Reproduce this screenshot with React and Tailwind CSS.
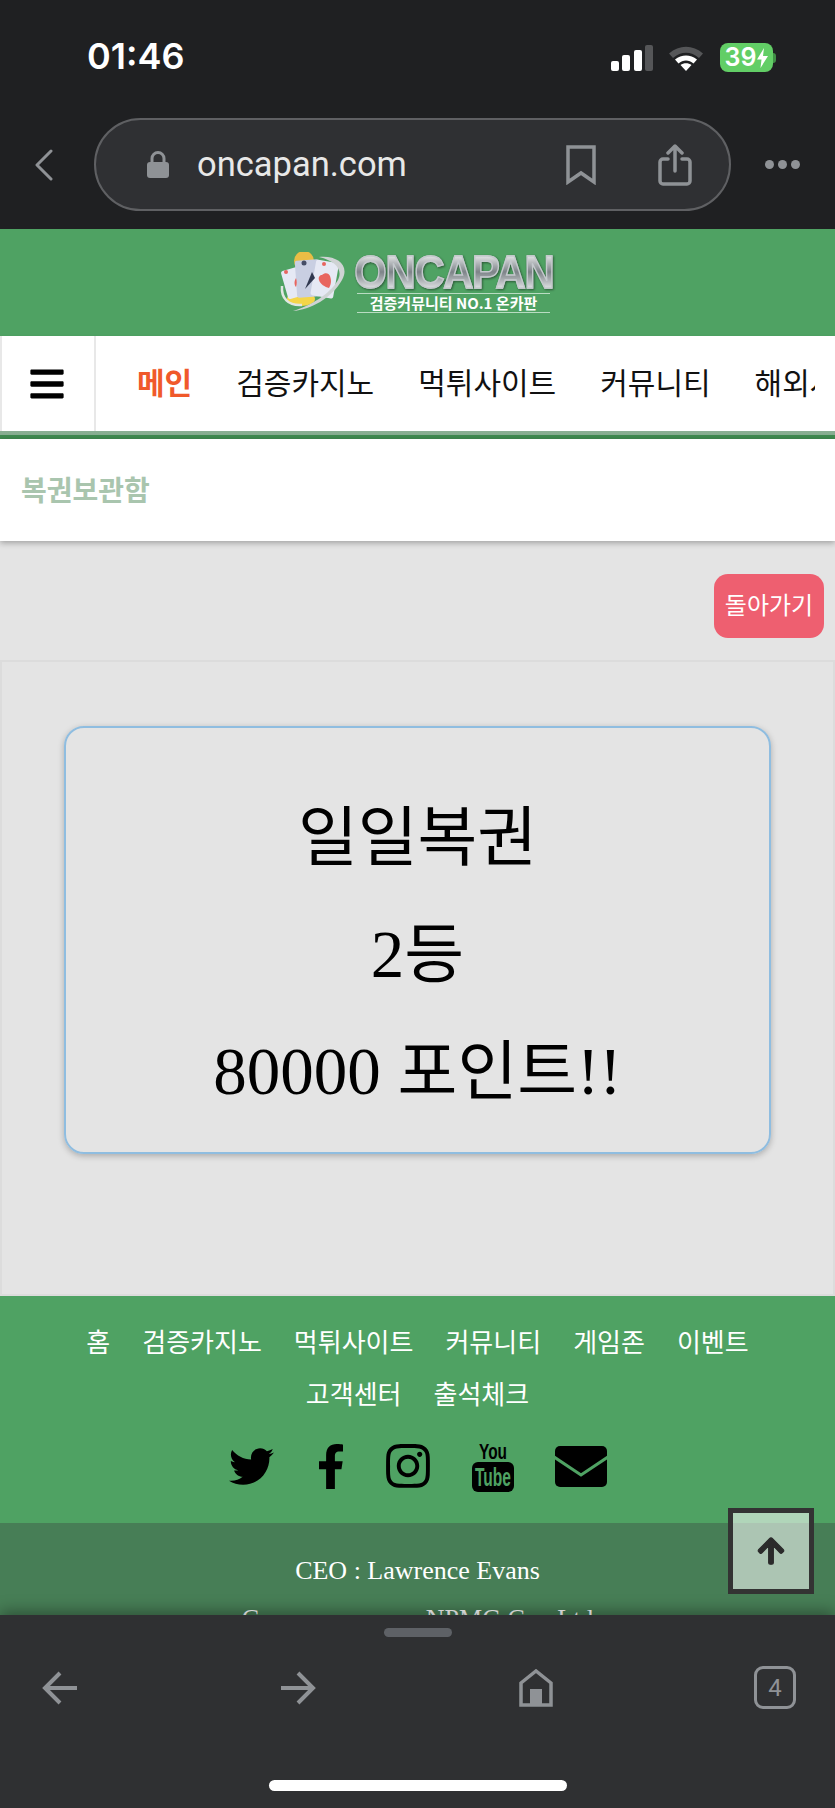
import { FaBars, FaTwitter, FaFacebookF, FaInstagram, FaArrowUp } from "react-icons/fa";

const sans = "font-['Liberation_Sans','Noto_Sans_CJK_KR',sans-serif]";

const navItems = ["메인", "검증카지노", "먹튀사이트", "커뮤니티", "해외사이트"];
const footerRow1 = ["홈", "검증카지노", "먹튀사이트", "커뮤니티", "게임존", "이벤트"];
const footerRow2 = ["고객센터", "출석체크"];

const StatusIcons = () => (
  <div className="flex items-center">
    {/* signal */}
    <svg width="42" height="26" viewBox="0 0 42 26">
      <rect x="0" y="16" width="8" height="10" rx="2" fill="#fff" />
      <rect x="11" y="10" width="8" height="16" rx="2" fill="#fff" />
      <rect x="23" y="5" width="8" height="21" rx="2" fill="#fff" />
      <rect x="34" y="0" width="8" height="26" rx="2" fill="#555658" />
    </svg>
    {/* wifi */}
    <svg className="ml-[15px]" width="36" height="26" viewBox="0 0 36 26">
      <path d="M1 8.500C11 -0.500 25 -0.500 35 8.500L31 13C23 6 13 6 5 13Z" fill="#555658" />
      <path d="M7 14.500C13.500 9 22.500 9 29 14.500L25.500 18.500C21 14.500 15 14.500 10.500 18.500Z" fill="#fff" />
      <path d="M12.500 20C15.500 17.500 20.500 17.500 23.500 20L18 26Z" fill="#fff" />
    </svg>
    {/* battery */}
    <div className="ml-[16px] flex items-center">
      <div className="w-[53px] h-[29px] rounded-[8px] bg-[#62ce66] flex items-center justify-center gap-[1px] text-white text-[25px] font-semibold leading-none font-['Inter',sans-serif]">
        39
        <svg width="11" height="20" viewBox="0 0 11 20">
          <path d="M7 0L0 11.500H4.500L3.500 20L11 8H6Z" fill="#fff" />
        </svg>
      </div>
      <div className="w-[3px] h-[10px] rounded-r-full bg-[#3f8f45]" />
    </div>
  </div>
);

const TopChrome = () => (
  <div className="h-[229px] shrink-0 bg-[#1f2022] text-white">
    <div className="h-[118px] pt-[36px] pl-[87px] pr-[59px] flex items-start justify-between">
      <span className="text-[36px] leading-[40px] font-semibold font-['Inter',sans-serif]">01:46</span>
      <div className="pt-[7px]">
        <StatusIcons />
      </div>
    </div>
    <div className="flex items-center pl-[35px] pr-[35px]">
      <svg width="18" height="32" viewBox="0 0 18 32" fill="none" stroke="#8f9296" strokeWidth="3" strokeLinecap="round" strokeLinejoin="round">
        <path d="M16 2L2 16L16 30" />
      </svg>
      <div className="ml-[41px] w-[637px] h-[93px] rounded-full border-2 border-[#5f6063] bg-[#2f3033] flex items-center">
        {/* lock */}
        <svg className="ml-[51px]" width="22" height="27" viewBox="0 0 22 27">
          <path d="M5 12V7.500a6 6 0 0 1 12 0V12" fill="none" stroke="#8f9296" strokeWidth="3" />
          <rect x="0" y="11" width="22" height="16" rx="3" fill="#8f9296" />
        </svg>
        <span className="ml-[28px] w-[208px] text-[34.500px] leading-none text-[#e8e8e8] whitespace-nowrap font-['Roboto',sans-serif]">oncapan.com</span>
        {/* bookmark */}
        <svg className="ml-[160px]" width="32" height="40" viewBox="0 0 32 40" fill="none" stroke="#8f9296" strokeWidth="3.500">
          <path d="M3 2H29V37L16 28L3 37Z" />
        </svg>
        {/* share */}
        <svg className="ml-[61px]" width="34" height="42" viewBox="0 0 34 42" fill="none" stroke="#8f9296" strokeWidth="3.500" strokeLinecap="round" strokeLinejoin="round">
          <path d="M17 27V3M10 9L17 2L24 9" />
          <path d="M10 15H5a3 3 0 0 0 -3 3V37a3 3 0 0 0 3 3H29a3 3 0 0 0 3 -3V18a3 3 0 0 0 -3 -3H24" />
        </svg>
      </div>
      <div className="ml-[34px] flex gap-[4px]">
        <span className="w-[9px] h-[9px] rounded-full bg-[#8f9296]" />
        <span className="w-[9px] h-[9px] rounded-full bg-[#8f9296]" />
        <span className="w-[9px] h-[9px] rounded-full bg-[#8f9296]" />
      </div>
    </div>
  </div>
);

const Logo = () => (
  <div className="flex items-center">
    <svg width="70" height="62" viewBox="0 0 68 62">
      <circle cx="24" cy="9" r="10" fill="#e9bd45" />
      <ellipse cx="21" cy="47" rx="14" ry="7" fill="#f4d548" />
      <rect x="4" y="16" width="22" height="29" rx="2" fill="#e6e9f4" transform="rotate(-16 15 30)" />
      <rect x="16" y="8" width="24" height="37" rx="2" fill="#c9cfe2" transform="rotate(-4 28 27)" />
      <rect x="33" y="9" width="23" height="36" rx="2" fill="#e6e9f4" transform="rotate(10 44 28)" />
      <circle cx="6" cy="20" r="2" fill="#e8655f" />
      <circle cx="24" cy="11" r="2.500" fill="#454d66" />
      <circle cx="44" cy="12" r="2" fill="#e8655f" />
      <path d="M32 20L25 37L35 26Z" fill="#30384f" />
      <path d="M16 26c-2 3 -2 7 0 9c1 -3 1 -6 0 -9Z" fill="#e8655f" />
      <path d="M42 23c3 -3 7 -2 8 1c1 3 2 7 -1 12c-4 -1 -9 -4 -10 -8c-1 -3 1 -5 3 -5Z" fill="#e8655f" />
      <path d="M39 5C58 3 70 14 62 28C52 46 30 58 13 59C30 54 50 42 58 28C63 18 56 9 39 5Z" fill="#cfd3d4" />
      <path d="M2 34C1 46 8 54 22 53" fill="none" stroke="#e0e6e2" strokeWidth="2.500" />
    </svg>
    <div className="ml-[5px] w-[200px] flex flex-col items-center">
      <span className="text-[47px] leading-[38px] font-bold tracking-[-1.500px] scale-x-[0.89] [-webkit-text-stroke:1.500px_#c4c9cd] text-transparent bg-clip-text bg-gradient-to-b from-[#f5f6f7] via-[#7d8388] to-[#f0f2f3] drop-shadow-[1px_1px_1px_rgba(0,0,0,0.45)] font-['Liberation_Sans',sans-serif]">
        ONCAPAN
      </span>
      <div className="mt-[2px] w-[193px] border-y border-[#b9dcc2] text-center text-white text-[15px] leading-[18px] font-semibold whitespace-nowrap font-['Noto_Sans_CJK_KR',sans-serif]">
        검증커뮤니티 NO.1 온카판
      </div>
    </div>
  </div>
);

const Nav = () => (
  <div className="shrink-0 pb-[4px] border-b-4 border-[#3f8a50] bg-gradient-to-b from-[#dfe5e0] to-[#86ad90] shadow-sm">
    <div className={`h-[95px] bg-white flex items-center ${sans}`}>
      <div className="w-[96px] h-full shrink-0 border-x-2 border-[#e8e8e8] flex items-center pl-[28px]">
        <FaBars className="w-[34px] h-[38px] text-black" />
      </div>
      <div className="flex-1 mr-[20px] pl-[41px] flex gap-[44px] overflow-hidden whitespace-nowrap text-[30px] leading-[36px] text-[#111]">
        {navItems.map((item, i) => (
          <span key={item} className={i === 0 ? "font-bold text-[#f0592b]" : ""}>
            {item}
          </span>
        ))}
      </div>
    </div>
  </div>
);

const Lottery = () => (
  <div className="flex-1 bg-[#e4e4e4] border-2 border-[#dcdcdc] pt-[64px] px-[62px]">
    <div className="h-[428px] border-2 border-[#8fbde0] rounded-[20px] shadow-[0_2px_6px_rgba(0,0,0,0.25)] flex flex-col items-center justify-center pt-[30px] text-[67px] leading-[116px] text-black font-['Liberation_Serif','Noto_Sans_CJK_KR',serif]">
      <p className="text-[65px]">일일복권</p>
      <p>
        2<span className="text-[65px]">등</span>
      </p>
      <p>
        80000 <span className="text-[65px]">포인트</span>!!
      </p>
    </div>
  </div>
);

const YoutubeIcon = () => (
  <svg width="42" height="52" viewBox="0 0 42 52">
    <text x="7" y="19" textLength="28" lengthAdjust="spacingAndGlyphs" fontSize="22" fontWeight="700" fontFamily="Liberation Sans" fill="#000">You</text>
    <rect x="0" y="22" width="42" height="30" rx="6" fill="#000" />
    <text x="3" y="46" textLength="36" lengthAdjust="spacingAndGlyphs" fontSize="25" fontWeight="700" fontFamily="Liberation Sans" fill="#4fa263">Tube</text>
  </svg>
);

const MailIcon = () => (
  <svg width="52" height="41" viewBox="0 0 52 41">
    <rect x="0" y="0" width="52" height="41" rx="5" fill="#000" />
    <path d="M-1 11L26 29L53 11" fill="none" stroke="#4fa263" strokeWidth="3" />
  </svg>
);

const Footer = () => (
  <div className="shrink-0">
    <div className={`h-[227px] bg-[#4fa263] text-white text-[26px] leading-[52px] pt-[21px] ${sans}`}>
      <div className="flex justify-center gap-[32px]">
        {footerRow1.map((item) => (
          <span key={item}>{item}</span>
        ))}
      </div>
      <div className="flex justify-center gap-[32px]">
        {footerRow2.map((item) => (
          <span key={item}>{item}</span>
        ))}
      </div>
      <div className="mt-[19px] flex justify-center items-center text-black">
        <FaTwitter className="w-[45px] h-[45px]" />
        <FaFacebookF className="ml-[43px] w-[28px] h-[47px]" />
        <FaInstagram className="ml-[40px] w-[46px] h-[50px]" />
        <div className="ml-[41px]">
          <YoutubeIcon />
        </div>
        <div className="ml-[41px]">
          <MailIcon />
        </div>
      </div>
    </div>
    <div className="h-[130px] bg-[#477e56] pt-[24px] text-center text-white text-[26px] leading-[48px] font-['Liberation_Serif',serif]">
      <p>CEO : Lawrence Evans</p>
      <p>Company name : NPMG Co., Ltd</p>
    </div>
  </div>
);

const BottomChrome = () => (
  <div className="relative z-10 h-[193px] shrink-0 bg-[#2f3032] shadow-[0_-4px_14px_rgba(0,0,0,0.35)] flex flex-col items-center">
    <div className="mt-[13px] w-[68px] h-[9px] rounded-full bg-[#5e6166]" />
    <div className="mt-[29px] w-full pl-[42px] pr-[39px] flex items-center">
      <svg width="35" height="34" viewBox="0 0 35 34" fill="none" stroke="#8f9296" strokeWidth="4">
        <path d="M35 17H3M18 2L3 17L18 32" />
      </svg>
      <svg className="ml-[204px]" width="35" height="34" viewBox="0 0 35 34" fill="none" stroke="#8f9296" strokeWidth="4">
        <path d="M0 17H32M17 2L32 17L17 32" />
      </svg>
      <svg className="ml-[203px]" width="34" height="38" viewBox="0 0 34 38">
        <path d="M2 36V14L17 2L32 14V36H2Z" fill="none" stroke="#8f9296" strokeWidth="3.500" />
        <rect x="11" y="20" width="12" height="16" fill="#8f9296" />
      </svg>
      <div className="ml-auto w-[42px] h-[43px] rounded-[9px] border-[3px] border-[#8f9296] flex items-center justify-center text-[24px] leading-none text-[#8f9296] font-['Roboto',sans-serif]">
        4
      </div>
    </div>
    <div className="mt-[71px] w-[298px] h-[11px] rounded-full bg-white" />
  </div>
);

export default function App() {
  return (
    <div className="relative w-[835px] h-[1808px] overflow-hidden flex flex-col">
      <TopChrome />
      <div className="flex-1 min-h-0 flex flex-col overflow-hidden bg-[#e4e4e4]">
        <div className="h-[107px] shrink-0 bg-[#4fa263] pr-[3px] flex items-center justify-center">
          <Logo />
        </div>
        <Nav />
        <div className={`relative h-[102px] shrink-0 bg-white shadow-[0_2px_6px_rgba(0,0,0,0.3)] pl-[21px] pt-[3px] flex items-center text-[28px] font-bold text-[#a9c5ae] ${sans}`}>
          복권보관함
        </div>
        <div className="h-[119px] shrink-0 pt-[33px] pr-[11px] flex justify-end">
          <button className={`w-[110px] h-[64px] rounded-[14px] bg-[#ee5f70] text-white text-[24px] whitespace-nowrap ${sans}`}>
            돌아가기
          </button>
        </div>
        <div className="h-[636px] shrink-0 flex flex-col">
          <Lottery />
        </div>
        <Footer />
      </div>
      {/* scroll to top button sits over the footer */}
      <div className="absolute left-[728px] top-[1508px] w-[86px] h-[86px] border-[5px] border-[#333] bg-white/55 flex items-center justify-center">
        <FaArrowUp className="w-[30px] h-[30px] text-[#2b2b2b] stroke-[20]" />
      </div>
      <BottomChrome />
    </div>
  );
}
